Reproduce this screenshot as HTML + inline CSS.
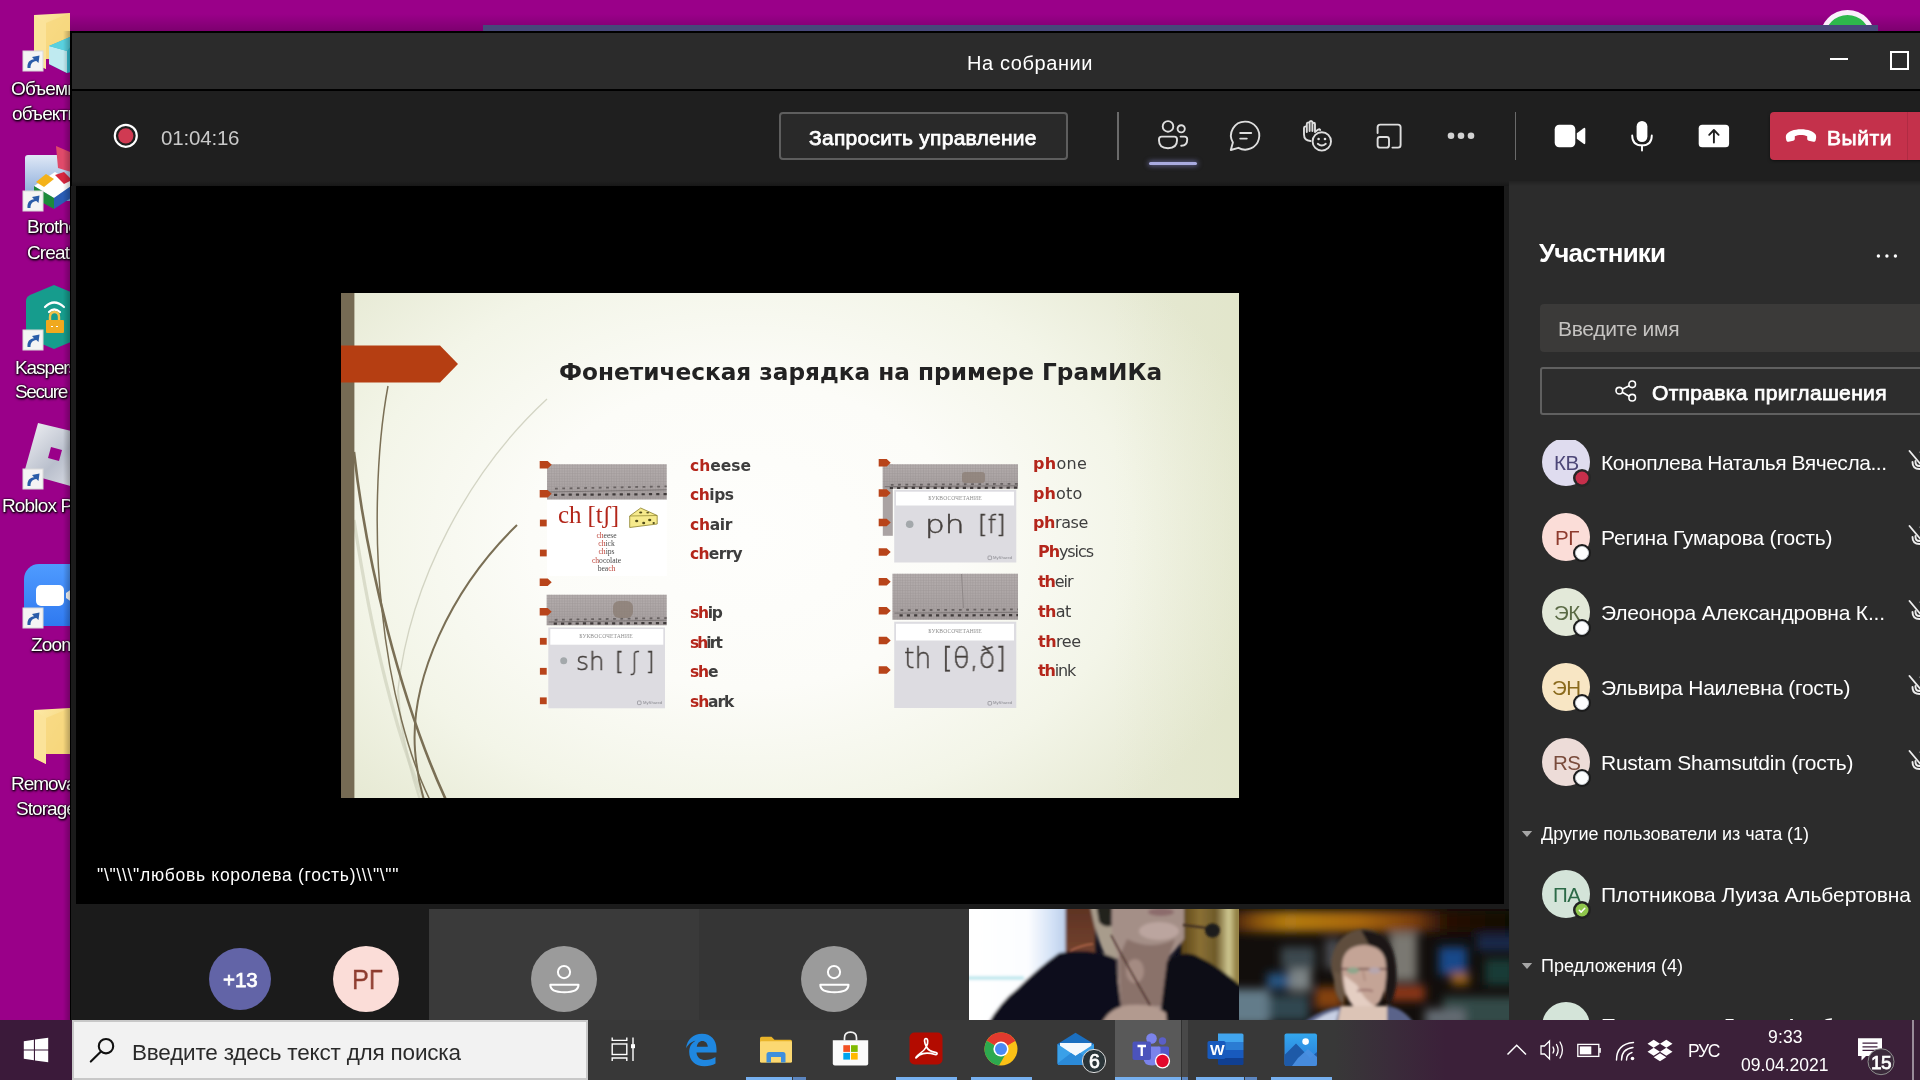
<!DOCTYPE html>
<html lang="ru"><head><meta charset="utf-8"><title>Собрание</title>
<style>

*{box-sizing:border-box;margin:0;padding:0}
html,body{width:1920px;height:1080px;overflow:hidden;background:#9a0089}
body{font-family:"Liberation Sans",sans-serif}
#root{position:absolute;left:0;top:0;width:1920px;height:1080px;overflow:hidden;background:#9a0089}
.t{position:absolute;white-space:nowrap;line-height:1;will-change:transform}
.a{position:absolute}
svg{position:absolute;overflow:visible}
.dl{text-shadow:0 0 2px #000,1px 1px 2px #000,0 1px 3px rgba(0,0,0,.9)}
.av{position:absolute;border-radius:50%;text-align:center}

</style></head>
<body>
<div id="root">
<!-- desktop -->
<div class="a" style="left:58px;top:14px;width:1862px;height:18px;background:linear-gradient(to bottom,rgba(0,0,0,0),rgba(0,0,0,.2))"></div>
<svg style="left:34px;top:13px" width="40" height="58" viewBox="0 0 40 58"><defs><linearGradient id="fg1" x1="0" y1="0" x2="1" y2="1"><stop offset="0" stop-color="#fde9a8"/><stop offset="1" stop-color="#f3cf6a"/></linearGradient></defs><path d="M0 2 L36 0 L36 46 L12 46 L12 56 L0 50Z" fill="url(#fg1)"/><path d="M0 2 L12 10 L12 56 L0 50Z" fill="#fbe39a"/><path d="M12 10 L36 0 L36 46 L12 46Z" fill="#f7d77e" opacity=".75"/></svg>
<svg style="left:49px;top:37px" width="26" height="36" viewBox="0 0 26 36"><path d="M0 9 L21 0 L26 2 L26 34 L18 36 L0 27Z" fill="#35bdd0"/><path d="M0 9 L18 14 L18 36 L0 27Z" fill="#bfeaf0"/><path d="M0 9 L21 0 L26 4 L18 14Z" fill="#59d0de"/></svg>
<svg style="left:23px;top:51px" width="20" height="20" viewBox="0 0 20 20"><rect x="0" y="0" width="20" height="20" fill="#f4f4f4" stroke="#d9d9d9" stroke-width="1"/><path d="M4.500 17 C4 11.500 7 8.500 11 8.300 L9 6 L16.500 4.500 L15.500 12 L13.300 10 C9.500 10.500 7.500 12.500 7.500 17Z" fill="#2a5ca8"/></svg>
<div class="t dl" style="left:11.20px;top:79px;font-size:19px;color:#fff;letter-spacing:-.85px">Объемные</div>
<div class="t dl" style="left:12.00px;top:104px;font-size:19px;color:#fff;letter-spacing:-.85px">объекты</div>
<svg style="left:24px;top:146px" width="60" height="64" viewBox="0 0 60 64"><defs><linearGradient id="bg2" x1="0" y1="0" x2="0" y2="1"><stop offset="0" stop-color="#dfe8f6"/><stop offset="1" stop-color="#7da3d6"/></linearGradient></defs><rect x="1" y="9" width="58" height="46" rx="3" fill="url(#bg2)"/><path d="M32 0 L60 12 L60 30 L34 22Z" fill="#e04a6a"/><path d="M10 40 L31 26 L50 38 L30 52Z" fill="#fff"/><path d="M12 36 L22 28 L30 33 L20 41Z" fill="#f4b21a"/><path d="M31 29 L40 26 L48 34 L40 38Z" fill="#d8263f"/><path d="M10 40 L30 52 L30 63 L10 52Z" fill="#1c8a3a"/><path d="M30 52 L50 38 L50 50 L30 63Z" fill="#2a5db5"/></svg>
<svg style="left:23px;top:191px" width="20" height="20" viewBox="0 0 20 20"><rect x="0" y="0" width="20" height="20" fill="#f4f4f4" stroke="#d9d9d9" stroke-width="1"/><path d="M4.500 17 C4 11.500 7 8.500 11 8.300 L9 6 L16.500 4.500 L15.500 12 L13.300 10 C9.500 10.500 7.500 12.500 7.500 17Z" fill="#2a5ca8"/></svg>
<div class="t dl" style="left:26.60px;top:217px;font-size:19px;color:#fff;letter-spacing:-.85px">Brother</div>
<div class="t dl" style="left:26.80px;top:243px;font-size:19px;color:#fff;letter-spacing:-.85px">Creative...</div>
<svg style="left:26px;top:285px" width="56" height="64" viewBox="0 0 56 64"><path d="M28 0 L52 10 Q56 12 56 16 L56 48 Q56 52 52 54 L28 64 L4 54 Q0 52 0 48 L0 16 Q0 12 4 10Z" fill="#169c8d"/><path d="M19 22 Q28 13 38 22" fill="none" stroke="#fff" stroke-width="2.2" stroke-linecap="round"/><path d="M23 27 Q28 22 34 27" fill="none" stroke="#fff" stroke-width="2.2" stroke-linecap="round"/><path d="M24 36 L24 32 Q24 27 28.5 27 Q33 27 33 32 L33 36" fill="none" stroke="#f2c14a" stroke-width="2.4"/><rect x="20" y="35" width="18" height="13" rx="1" fill="#f0a91e"/><path d="M25 41.5h2m3 0h2" stroke="#fff" stroke-width="1.2"/></svg>
<svg style="left:23px;top:330px" width="20" height="20" viewBox="0 0 20 20"><rect x="0" y="0" width="20" height="20" fill="#f4f4f4" stroke="#d9d9d9" stroke-width="1"/><path d="M4.500 17 C4 11.500 7 8.500 11 8.300 L9 6 L16.500 4.500 L15.500 12 L13.300 10 C9.500 10.500 7.500 12.500 7.500 17Z" fill="#2a5ca8"/></svg>
<div class="t dl" style="left:15.00px;top:358px;font-size:19px;color:#fff;letter-spacing:-1.1px">Kaspersky</div>
<div class="t dl" style="left:15.00px;top:382px;font-size:19px;color:#fff;letter-spacing:-1.4px">Secure Co...</div>
<svg style="left:24px;top:423px" width="64" height="66" viewBox="0 0 64 66"><defs><linearGradient id="rg4" x1="0" y1="0" x2="1" y2="1"><stop offset="0" stop-color="#f2f3f6"/><stop offset=".55" stop-color="#b9bfcc"/><stop offset="1" stop-color="#e4e6ec"/></linearGradient></defs><path d="M14 0 L64 12 L50 64 L0 50Z" fill="url(#rg4)"/><path d="M27 24 L38 27 L35 38 L24 35Z" fill="#9a0089"/></svg>
<svg style="left:23px;top:469px" width="20" height="20" viewBox="0 0 20 20"><rect x="0" y="0" width="20" height="20" fill="#f4f4f4" stroke="#d9d9d9" stroke-width="1"/><path d="M4.500 17 C4 11.500 7 8.500 11 8.300 L9 6 L16.500 4.500 L15.500 12 L13.300 10 C9.500 10.500 7.500 12.500 7.500 17Z" fill="#2a5ca8"/></svg>
<div class="t dl" style="left:2.20px;top:496px;font-size:19px;color:#fff;letter-spacing:-.85px">Roblox Player</div>
<svg style="left:24px;top:564px" width="62" height="62" viewBox="0 0 62 62"><defs><linearGradient id="zg5" x1="0" y1="0" x2="0" y2="1"><stop offset="0" stop-color="#4f9bff"/><stop offset="1" stop-color="#2f79f0"/></linearGradient></defs><rect width="62" height="62" rx="15" fill="url(#zg5)"/><rect x="12" y="21" width="28" height="21" rx="5" fill="#fff"/><path d="M42 29 L52 22 L52 41 L42 34Z" fill="#fff"/></svg>
<svg style="left:23px;top:608px" width="20" height="20" viewBox="0 0 20 20"><rect x="0" y="0" width="20" height="20" fill="#f4f4f4" stroke="#d9d9d9" stroke-width="1"/><path d="M4.500 17 C4 11.500 7 8.500 11 8.300 L9 6 L16.500 4.500 L15.500 12 L13.300 10 C9.500 10.500 7.500 12.500 7.500 17Z" fill="#2a5ca8"/></svg>
<div class="t dl" style="left:30.50px;top:635px;font-size:19px;color:#fff;letter-spacing:-.8px">Zoom</div>
<svg style="left:34px;top:708px" width="40" height="58" viewBox="0 0 40 58"><defs><linearGradient id="fg6" x1="0" y1="0" x2="1" y2="1"><stop offset="0" stop-color="#fde9a8"/><stop offset="1" stop-color="#f3cf6a"/></linearGradient></defs><path d="M0 2 L36 0 L36 46 L12 46 L12 56 L0 50Z" fill="url(#fg6)"/><path d="M0 2 L12 10 L12 56 L0 50Z" fill="#fbe39a"/><path d="M12 10 L36 0 L36 46 L12 46Z" fill="#f7d77e" opacity=".75"/></svg>
<div class="t dl" style="left:11.20px;top:774px;font-size:19px;color:#fff;letter-spacing:-1.05px">Removable</div>
<div class="t dl" style="left:15.60px;top:799px;font-size:19px;color:#fff;letter-spacing:-.95px">Storage ...</div>
<div class="a" style="left:63px;top:31px;width:8px;height:989px;background:linear-gradient(to right,rgba(0,0,0,0),rgba(0,0,0,.28))"></div>
<div class="a" style="left:1820px;top:9.5px;width:55px;height:55px;border-radius:50%;background:#2eb84c;border:5px solid #fbeefb"></div>
<div class="a" style="left:483px;top:25px;width:1395px;height:7px;background:#47487a"></div>
<!-- meeting window -->
<div class="a" style="left:70px;top:31px;width:1850px;height:989px;background:#000"></div>
<div class="a" style="left:72px;top:33px;width:1848px;height:56px;background:#2b2b2b"></div>
<div class="a" style="left:72px;top:91px;width:1848px;height:95px;background:linear-gradient(to bottom,#1f1f1f 0,#1f1f1f 90px,#181818 95px)"></div>
<div class="a" style="left:71px;top:186px;width:1849px;height:834px;background:#1b1b1b"></div>
<div class="a" style="left:76px;top:186px;width:1428px;height:718px;background:#000"></div>
<div class="t" style="left:967.30px;top:53px;font-size:20px;color:#fff;letter-spacing:0.594px;">На собрании</div>
<div class="a" style="left:1830px;top:58.4px;width:18px;height:1.6px;background:#fff"></div>
<div class="a" style="left:1890px;top:51px;width:18.5px;height:18.5px;border:2px solid #fff"></div>
<svg style="left:112px;top:122px" width="28" height="28" viewBox="0 0 28 28"><circle cx="13.8" cy="13.8" r="11" fill="none" stroke="#fff" stroke-width="2.2"/><circle cx="13.8" cy="13.8" r="7.6" fill="#d03a52"/></svg>
<div class="t" style="left:160.60px;top:128px;font-size:20.5px;color:#c9c9c9;letter-spacing:-0.185px;">01:04:16</div>
<div class="a" style="left:779px;top:112px;width:289px;height:48px;border:2px solid #5e5e5e;border-radius:4px;background:#292929"></div>
<div class="t" style="left:809.30px;top:127px;font-size:21px;color:#fff;letter-spacing:0.260px;-webkit-text-stroke:.75px #fff;">Запросить управление</div>
<div class="a" style="left:1117px;top:112px;width:2px;height:48px;background:#6a6a6a"></div>
<div class="a" style="left:1515px;top:112px;width:1.4px;height:48px;background:#6a6a6a"></div>
<svg style="left:1156px;top:119px" width="34" height="32" viewBox="0 0 34 32"><g fill="none" stroke="#dedede" stroke-width="1.9" stroke-linecap="round" stroke-linejoin="round"><circle cx="12" cy="7.4" r="5.3"/><circle cx="25.2" cy="9.8" r="3.6"/><path d="M5.6 17.6 H18.4 Q21 17.6 21 20.2 V21.6 Q21 29.2 12 29.2 Q3 29.2 3 21.6 V20.2 Q3 17.6 5.6 17.6Z"/><path d="M24.6 17.6 H28.6 Q31.2 17.6 31.2 20.2 V20.8 Q31.2 26.6 25.2 26.8"/></g></svg>
<div class="a" style="left:1149px;top:161.6px;width:48px;height:3.6px;border-radius:2px;background:#a9abe0;box-shadow:0 0 5px 1px rgba(150,152,230,.55)"></div>
<svg style="left:1228px;top:119px" width="34" height="34" viewBox="0 0 34 34"><g fill="none" stroke="#dedede" stroke-width="1.9" stroke-linecap="round" stroke-linejoin="round"><path d="M17.2 2.6 A14 14 0 1 1 10.4 28.8 L2.8 31 L4.9 23.6 A14 14 0 0 1 17.2 2.6Z"/><path d="M12.2 14h11M12.2 19.6h6.6"/></g></svg>
<svg style="left:1301px;top:119px" width="34" height="34" viewBox="0 0 34 34"><g fill="none" stroke="#dedede" stroke-width="1.9" stroke-linecap="round" stroke-linejoin="round"><path d="M3 9 V15.5 Q3 21.5 9.5 22 M3 9 Q3 7.4 4.4 7.4 Q5.8 7.400 5.8 9 V13 M5.800 13 V5 Q5.800 3.400 7.200 3.400 Q8.600 3.400 8.600 5 V12 M8.600 12 V3.600 Q8.600 2 10 2 Q11.400 2 11.400 3.600 V12 M11.400 12 V5.200 Q11.400 3.800 12.700 3.800 Q14 3.800 14 5.200 V13 L17.200 10.600 Q18.600 9.800 19.200 11"/><circle cx="20.8" cy="22.400" r="9.200"/><path d="M16.800 24.800 Q20.800 28.400 24.800 24.800"/></g><circle cx="17.600" cy="20" r="1.300" fill="#dedede"/><circle cx="24" cy="20" r="1.300" fill="#dedede"/></svg>
<svg style="left:1375px;top:122px" width="28" height="28" viewBox="0 0 28 28"><g fill="none" stroke="#dedede" stroke-width="1.9" stroke-linecap="round" stroke-linejoin="round"><path d="M2.600 11 V5.200 Q2.600 2.600 5.200 2.600 H23 Q25.600 2.600 25.600 5.200 V23 Q25.600 25.600 23 25.600 H17.400"/><rect x="2.600" y="15" width="11.400" height="10.600" rx="2.400"/></g></svg>
<svg style="left:1446px;top:130px" width="30" height="12" viewBox="0 0 30 12"><circle cx="5" cy="5.800" r="3.300" fill="#d2d2d2"/><circle cx="15" cy="5.800" r="3.300" fill="#d2d2d2"/><circle cx="25" cy="5.800" r="3.300" fill="#d2d2d2"/></svg>
<svg style="left:1554px;top:124px" width="33" height="24" viewBox="0 0 33 24"><rect x=".7" y=".7" width="20.600" height="22.600" rx="4.500" fill="#fff"/><path d="M22.800 9.200 L29.600 4.200 Q31.300 3.200 31.300 5.200 V18.800 Q31.300 20.800 29.600 19.800 L22.800 14.800Z" fill="#fff"/></svg>
<svg style="left:1630px;top:120px" width="24" height="32" viewBox="0 0 24 32"><rect x="6.600" y="1" width="10.800" height="21" rx="5.400" fill="#fff"/><path d="M2.200 15.500 Q2.200 25.400 12 25.400 Q21.800 25.400 21.800 15.500" fill="none" stroke="#fff" stroke-width="1.900" stroke-linecap="round"/><path d="M12 25.400V30.600" stroke="#fff" stroke-width="1.900" stroke-linecap="round"/></svg>
<svg style="left:1698px;top:124px" width="32" height="24" viewBox="0 0 32 24"><rect x=".7" y=".7" width="30.400" height="22.600" rx="3.600" fill="#fff"/><path d="M15.900 18.600 V6.400 M11.200 10.800 L15.900 6 L20.600 10.800" fill="none" stroke="#1f1f1f" stroke-width="1.900" stroke-linecap="round" stroke-linejoin="round"/></svg>
<div class="a" style="left:1770px;top:112px;width:160px;height:48px;border-radius:4px;background:#c4314b;box-shadow:0 1px 3px rgba(0,0,0,.5)"></div>
<div class="a" style="left:1906.500px;top:112px;width:1.500px;height:48px;background:#b02b43"></div>
<svg style="left:1785px;top:128px" width="32" height="16" viewBox="0 0 32 16"><path d="M16 1.200 C9 1.200 3.200 3.400 1.400 6.600 C.5 8.200 .8 10.600 1.400 12.400 C1.700 13.400 2.600 13.900 3.600 13.700 L8.200 12.700 C9.200 12.500 9.800 11.700 9.800 10.700 L9.800 8.200 C11.600 7.400 13.800 7 16 7 C18.200 7 20.400 7.400 22.200 8.200 L22.200 10.700 C22.200 11.700 22.800 12.500 23.800 12.700 L28.400 13.700 C29.400 13.900 30.300 13.400 30.600 12.400 C31.200 10.600 31.500 8.200 30.600 6.600 C28.800 3.400 23 1.200 16 1.200Z" fill="#fff"/></svg>
<div class="t" style="left:1827.30px;top:127px;font-size:21px;color:#fff;letter-spacing:0.580px;-webkit-text-stroke:.75px #fff;">Выйти</div>
<!-- shared slide -->
<div class="a" style="left:0;top:0;width:1920px;height:1080px;filter:blur(.45px)">
<div class="a" style="left:341px;top:293px;width:898px;height:505px;background:radial-gradient(ellipse 60% 76% at 45% 48%,#fefefc 0,#fcfcf8 40%,#f3f5e8 72%,#e6e9d3 100%)"></div>
<div class="a" style="left:341px;top:293px;width:898px;height:505px;background:linear-gradient(to right,rgba(215,220,180,0) 86%,rgba(212,218,176,.22) 100%)"></div>
<svg style="left:0;top:0" width="1920" height="1080" viewBox="0 0 1920 1080"><defs><pattern id="nb" width="2.600" height="2.600" patternUnits="userSpaceOnUse"><path d="M0 .4H2.600M.4 0V2.600" stroke="#8f8888" stroke-width=".5"/></pattern><linearGradient id="nbg" x1="0" y1="0" x2="0" y2="1"><stop offset="0" stop-color="#b4adad"/><stop offset="1" stop-color="#a59e9e"/></linearGradient><clipPath id="sc"><rect x="341" y="293" width="898" height="505"/></clipPath><filter id="b1" x="-10%" y="-10%" width="120%" height="120%"><feGaussianBlur stdDeviation=".6"/></filter></defs><g clip-path="url(#sc)"><path d="M547 399 C470 470 410 580 398 690" fill="none" stroke="#c9cbb8" stroke-width="1.300" opacity=".8"/><path d="M354 520 C372 640 398 740 424 800" fill="none" stroke="#d3d6c2" stroke-width="3.200" opacity=".8"/><path d="M398 690 C400 730 410 770 420 800" fill="none" stroke="#cfd2bd" stroke-width="2.200" opacity=".7"/><path d="M388 386 C376 450 374 540 382 610 C390 690 410 760 430 800" fill="none" stroke="#7a6f55" stroke-width="1.500"/><path d="M354 452 C366 560 400 700 446 800" fill="none" stroke="#7a6f55" stroke-width="2.600"/><path d="M517 525 C450 590 410 680 415 750 C417 775 421 790 424 800" fill="none" stroke="#7a6f55" stroke-width="2"/></g><rect x="341" y="293" width="13.400" height="505" fill="#766b54"/><path d="M341 345.500 H440 L458 364 L440 382.500 H341Z" fill="#b53e12"/><rect x="547.0" y="464.2" width="119.7" height="35.5" fill="url(#nbg)"/><rect x="547.0" y="464.2" width="119.7" height="35.5" fill="url(#nb)" opacity=".55"/><path d="M549.0 492.0 L666.7 489.8" stroke="#5a5454" stroke-width=".7" opacity=".8"/><path d="M555.0 488.6 L666.7 486.4" stroke="#5e5858" stroke-width="1.800" stroke-dasharray="2.800 4.500" opacity=".85"/><path d="M554.0 494.8 L666.7 494.1" stroke="#403b3b" stroke-width="2.200" stroke-dasharray="3.200 4.100"/><rect x="547" y="499.700" width="119.700" height="76.300" fill="#fff"/><g transform="translate(628.700,507)"><path d="M1 9 L12 1 L28.500 8.500 L28.500 17 L1 20.500Z" fill="#f6ea8c" stroke="#8a7f2a" stroke-width=".8"/><path d="M1 9 L28.500 8.500" stroke="#8a7f2a" stroke-width=".7" fill="none"/><ellipse cx="8" cy="14" rx="1.600" ry="1.200" fill="#4f4a1a"/><ellipse cx="15" cy="16" rx="1.500" ry="1.200" fill="#4f4a1a"/><ellipse cx="21" cy="13" rx="1.600" ry="1.200" fill="#4f4a1a"/><ellipse cx="12" cy="5.500" rx="1.600" ry=".9" fill="#4f4a1a"/><ellipse cx="19" cy="5.800" rx="1.500" ry=".8" fill="#4f4a1a"/><ellipse cx="25" cy="16" rx="1.200" ry="1" fill="#4f4a1a"/></g><rect x="546.7" y="594.7" width="120.0" height="30.6" fill="url(#nbg)"/><rect x="546.7" y="594.7" width="120.0" height="30.6" fill="url(#nb)" opacity=".55"/><path d="M548.7 622.0 L666.7 620.2" stroke="#5a5454" stroke-width=".7" opacity=".8"/><path d="M554.7 619.8 L666.7 618.0" stroke="#5e5858" stroke-width="1.800" stroke-dasharray="2.800 4.500" opacity=".85"/><path d="M553.7 623.6 L666.7 623.1" stroke="#403b3b" stroke-width="2.200" stroke-dasharray="3.200 4.100"/><rect x="613" y="601" width="20" height="17" rx="6" fill="#8a7c72" opacity=".75" filter="url(#b1)"/><rect x="548.300" y="627.500" width="116.700" height="80.800" fill="#dddce1"/><rect x="550.300" y="629" width="113" height="15.700" fill="#fff"/><circle cx="563.700" cy="660.800" r="3.500" fill="#a3a8ab"/><rect x="882.800" y="464.200" width="10" height="71.600" fill="#aaa3a3"/><rect x="882.8" y="464.2" width="135.2" height="24.5" fill="url(#nbg)"/><rect x="882.8" y="464.2" width="135.2" height="24.5" fill="url(#nb)" opacity=".55"/><path d="M884.8 486.7 L1018.0 485.7" stroke="#5a5454" stroke-width=".7" opacity=".8"/><path d="M890.8 484.8 L1018.0 483.8" stroke="#5e5858" stroke-width="1.800" stroke-dasharray="2.800 4.500" opacity=".85"/><path d="M889.8 488.0 L1018.0 487.7" stroke="#403b3b" stroke-width="2.200" stroke-dasharray="3.200 4.100"/><rect x="962" y="472" width="23" height="11" rx="3" fill="#8a7c72" opacity=".7" filter="url(#b1)"/><rect x="894.200" y="489.700" width="122.100" height="72.800" fill="#dddce1"/><rect x="896" y="491.700" width="118" height="13.800" fill="#fff"/><circle cx="909.700" cy="524.200" r="3.800" fill="#a3a8ab"/><rect x="892.5" y="573.7" width="125.5" height="46.0" fill="url(#nbg)"/><rect x="892.5" y="573.7" width="125.5" height="46.0" fill="url(#nb)" opacity=".55"/><path d="M894.5 613.1 L1018.0 612.3" stroke="#5a5454" stroke-width=".7" opacity=".8"/><path d="M900.5 610.2 L1018.0 609.4" stroke="#5e5858" stroke-width="1.800" stroke-dasharray="2.800 4.500" opacity=".85"/><path d="M899.5 615.4 L1018.0 615.2" stroke="#403b3b" stroke-width="2.200" stroke-dasharray="3.200 4.100"/><path d="M961.500 574 L963.500 608" stroke="#8f8888" stroke-width="1"/><rect x="894.200" y="621.700" width="122.100" height="86.300" fill="#dddce1"/><rect x="896" y="623.800" width="118" height="16.700" fill="#fff"/><path d="M539.7 461.0 h8 l4 3.700 l-4 3.700 h-8Z" fill="#b8441a"/><path d="M539.7 490.0 h8 l4 3.700 l-4 3.700 h-8Z" fill="#b8441a"/><rect x="539.9" y="519.6" width="6.800" height="6.800" fill="#b8441a"/><rect x="539.9" y="549.6" width="6.800" height="6.800" fill="#b8441a"/><path d="M539.7 578.5 h8 l4 3.700 l-4 3.700 h-8Z" fill="#b8441a"/><path d="M539.7 608.0 h8 l4 3.700 l-4 3.700 h-8Z" fill="#b8441a"/><rect x="539.9" y="637.9" width="6.800" height="6.800" fill="#b8441a"/><rect x="539.9" y="667.9" width="6.800" height="6.800" fill="#b8441a"/><rect x="539.9" y="697.4" width="6.800" height="6.800" fill="#b8441a"/><path d="M878.7 459.1 h8 l4 3.700 l-4 3.700 h-8Z" fill="#b8441a"/><path d="M878.7 489.3 h8 l4 3.700 l-4 3.700 h-8Z" fill="#b8441a"/><path d="M878.7 518.8 h8 l4 3.700 l-4 3.700 h-8Z" fill="#b8441a"/><path d="M878.7 548.3 h8 l4 3.700 l-4 3.700 h-8Z" fill="#b8441a"/><path d="M878.7 578.0 h8 l4 3.700 l-4 3.700 h-8Z" fill="#b8441a"/><path d="M878.7 607.1 h8 l4 3.700 l-4 3.700 h-8Z" fill="#b8441a"/><path d="M878.7 636.8 h8 l4 3.700 l-4 3.700 h-8Z" fill="#b8441a"/><path d="M878.7 666.3 h8 l4 3.700 l-4 3.700 h-8Z" fill="#b8441a"/><rect x="637.5" y="701.0" width="3.600" height="3.600" rx=".8" fill="none" stroke="#8a8a90" stroke-width=".7"/><rect x="988.0" y="556.0" width="3.600" height="3.600" rx=".8" fill="none" stroke="#8a8a90" stroke-width=".7"/><rect x="988.0" y="701.5" width="3.600" height="3.600" rx=".8" fill="none" stroke="#8a8a90" stroke-width=".7"/></svg>
<div class="t" style="left:558.60px;top:361px;font-size:22.3px;color:#222;font-weight:700;font-family:'DejaVu Sans','Liberation Sans',sans-serif;transform:scaleX(1.041);transform-origin:0 0;">Фонетическая зарядка на примере ГрамИКа</div>
<div class="t" style="left:689.50px;top:459px;font-size:15.5px;font-weight:700;font-family:'DejaVu Sans',sans-serif;color:#b4261b;letter-spacing:0.003px">ch<span style="color:#3e3e3e">eese</span></div>
<div class="t" style="left:689.50px;top:488px;font-size:15.5px;font-weight:700;font-family:'DejaVu Sans',sans-serif;color:#b4261b;letter-spacing:-0.464px">ch<span style="color:#3e3e3e">ips</span></div>
<div class="t" style="left:689.50px;top:518px;font-size:15.5px;font-weight:700;font-family:'DejaVu Sans',sans-serif;color:#b4261b;letter-spacing:-0.285px">ch<span style="color:#3e3e3e">air</span></div>
<div class="t" style="left:689.50px;top:547px;font-size:15.5px;font-weight:700;font-family:'DejaVu Sans',sans-serif;color:#b4261b;letter-spacing:-0.685px">ch<span style="color:#3e3e3e">erry</span></div>
<div class="t" style="left:689.50px;top:606px;font-size:15.5px;font-weight:700;font-family:'DejaVu Sans',sans-serif;color:#b4261b;letter-spacing:-1.290px">sh<span style="color:#3e3e3e">ip</span></div>
<div class="t" style="left:689.50px;top:636px;font-size:15.5px;font-weight:700;font-family:'DejaVu Sans',sans-serif;color:#b4261b;letter-spacing:-1.957px">sh<span style="color:#3e3e3e">irt</span></div>
<div class="t" style="left:689.50px;top:665px;font-size:15.5px;font-weight:700;font-family:'DejaVu Sans',sans-serif;color:#b4261b;letter-spacing:-1.137px">sh<span style="color:#3e3e3e">e</span></div>
<div class="t" style="left:689.50px;top:695px;font-size:15.5px;font-weight:700;font-family:'DejaVu Sans',sans-serif;color:#b4261b;letter-spacing:-1.093px">sh<span style="color:#3e3e3e">ark</span></div>
<div class="t" style="left:1033.40px;top:456px;font-size:16px;font-weight:700;font-family:'DejaVu Sans',sans-serif;color:#b4261b;letter-spacing:0.296px">ph<span style="color:#3e3e3e;font-weight:400">one</span></div>
<div class="t" style="left:1033.40px;top:486px;font-size:16px;font-weight:700;font-family:'DejaVu Sans',sans-serif;color:#b4261b;letter-spacing:0.126px">ph<span style="color:#3e3e3e;font-weight:400">oto</span></div>
<div class="t" style="left:1033.40px;top:515px;font-size:16px;font-weight:700;font-family:'DejaVu Sans',sans-serif;color:#b4261b;letter-spacing:-0.421px">ph<span style="color:#3e3e3e;font-weight:400">rase</span></div>
<div class="t" style="left:1038.30px;top:544px;font-size:16px;font-weight:700;font-family:'DejaVu Sans',sans-serif;color:#b4261b;letter-spacing:-1.083px">Ph<span style="color:#3e3e3e;font-weight:400">ysics</span></div>
<div class="t" style="left:1037.60px;top:574px;font-size:16px;font-weight:700;font-family:'DejaVu Sans',sans-serif;color:#b4261b;letter-spacing:-1.102px">th<span style="color:#3e3e3e;font-weight:400">eir</span></div>
<div class="t" style="left:1037.60px;top:604px;font-size:16px;font-weight:700;font-family:'DejaVu Sans',sans-serif;color:#b4261b;letter-spacing:-0.606px">th<span style="color:#3e3e3e;font-weight:400">at</span></div>
<div class="t" style="left:1037.60px;top:634px;font-size:16px;font-weight:700;font-family:'DejaVu Sans',sans-serif;color:#b4261b;letter-spacing:-0.488px">th<span style="color:#3e3e3e;font-weight:400">ree</span></div>
<div class="t" style="left:1037.60px;top:663px;font-size:16px;font-weight:700;font-family:'DejaVu Sans',sans-serif;color:#b4261b;letter-spacing:-1.148px">th<span style="color:#3e3e3e;font-weight:400">ink</span></div>
<div class="t" style="left:557.50px;top:502px;font-size:25px;color:#b3261a;letter-spacing:-0.128px;font-family:'Liberation Serif',serif;">ch [tʃ]</div>
<div class="t" style="left:576px;top:532.2px;width:61px;text-align:center;font-family:Liberation Serif,serif;font-size:7.6px;color:#333;opacity:.9"><span style="color:#b3261a">ch</span>eese<span style="color:#b3261a"></span></div>
<div class="t" style="left:576px;top:540.3px;width:61px;text-align:center;font-family:Liberation Serif,serif;font-size:7.6px;color:#333;opacity:.9"><span style="color:#b3261a">ch</span>ick<span style="color:#b3261a"></span></div>
<div class="t" style="left:576px;top:548.4px;width:61px;text-align:center;font-family:Liberation Serif,serif;font-size:7.6px;color:#333;opacity:.9"><span style="color:#b3261a">ch</span>ips<span style="color:#b3261a"></span></div>
<div class="t" style="left:576px;top:556.5px;width:61px;text-align:center;font-family:Liberation Serif,serif;font-size:7.6px;color:#333;opacity:.9"><span style="color:#b3261a">ch</span>ocolate<span style="color:#b3261a"></span></div>
<div class="t" style="left:576px;top:564.6px;width:61px;text-align:center;font-family:Liberation Serif,serif;font-size:7.6px;color:#333;opacity:.9"><span style="color:#b3261a"></span>bea<span style="color:#b3261a">ch</span></div>
<div class="t" style="left:566.0px;top:634.2px;width:80px;text-align:center;font-family:Liberation Serif,serif;font-size:5.6px;color:#8d8d8d;letter-spacing:.1px">БУКВОСОЧЕТАНИЕ</div>
<div class="t" style="left:915.0px;top:495.8px;width:80px;text-align:center;font-family:Liberation Serif,serif;font-size:5.6px;color:#8d8d8d;letter-spacing:.1px">БУКВОСОЧЕТАНИЕ</div>
<div class="t" style="left:915.0px;top:629.4px;width:80px;text-align:center;font-family:Liberation Serif,serif;font-size:5.6px;color:#8d8d8d;letter-spacing:.1px">БУКВОСОЧЕТАНИЕ</div>
<div class="t" style="left:575.80px;top:649px;font-size:25.5px;color:#443f3c;font-family:'DejaVu Sans Light','DejaVu Sans',sans-serif;font-weight:200;-webkit-text-stroke:.5px #443f3c;transform:scaleX(0.971);transform-origin:0 0;">sh</div>
<div class="t" style="left:615.30px;top:649px;font-size:25.5px;color:#443f3c;font-family:'DejaVu Sans Light','DejaVu Sans',sans-serif;font-weight:200;-webkit-text-stroke:.5px #443f3c;transform:scaleX(0.884);transform-origin:0 0;">[ ʃ ]</div>
<div class="t" style="left:925.00px;top:512px;font-size:25.5px;color:#443f3c;font-family:'DejaVu Sans Light','DejaVu Sans',sans-serif;font-weight:200;-webkit-text-stroke:.5px #443f3c;transform:scaleX(1.224);transform-origin:0 0;">ph</div>
<div class="t" style="left:978.00px;top:512px;font-size:25.5px;color:#443f3c;font-family:'DejaVu Sans Light','DejaVu Sans',sans-serif;font-weight:200;-webkit-text-stroke:.5px #443f3c;transform:scaleX(0.952);transform-origin:0 0;">[f]</div>
<div class="t" style="left:904.00px;top:645px;font-size:28px;color:#443f3c;font-family:'DejaVu Sans Light','DejaVu Sans',sans-serif;font-weight:200;-webkit-text-stroke:.5px #443f3c;transform:scaleX(0.950);transform-origin:0 0;">th</div>
<div class="t" style="left:942.00px;top:645px;font-size:28px;color:#443f3c;font-family:'DejaVu Sans Light','DejaVu Sans',sans-serif;font-weight:200;-webkit-text-stroke:.5px #443f3c;transform:scaleX(0.989);transform-origin:0 0;">[θ,ð]</div>
<div class="t" style="left:642.5px;top:700.8px;font-size:4.2px;color:#8a8a90">MyShared</div>
<div class="t" style="left:993.0px;top:555.8px;font-size:4.2px;color:#8a8a90">MyShared</div>
<div class="t" style="left:993.0px;top:701.3px;font-size:4.2px;color:#8a8a90">MyShared</div>
</div>
<div class="t" style="left:97.00px;top:867px;font-size:17.5px;color:#fff;letter-spacing:0.705px;">"\"\\\"любовь королева (гость)\\\"\""</div>
<!-- participants strip -->
<div class="av" style="left:208.500px;top:948px;width:62px;height:62px;background:#6264a7"></div>
<div class="t" style="left:222.80px;top:970px;font-size:20.5px;color:#fff;-webkit-text-stroke:.75px #fff;transform:scaleX(0.992);transform-origin:0 0;">+13</div>
<div class="av" style="left:333px;top:946px;width:66px;height:66px;background:#fbddd8"></div>
<div class="t" style="left:351.50px;top:967px;font-size:27px;color:#8d3b2e;-webkit-text-stroke:.35px #8d3b2e;transform:scaleX(0.935);transform-origin:0 0;">РГ</div>
<div class="a" style="left:429px;top:909px;width:270px;height:111px;background:#3a3a3a"></div>
<div class="a" style="left:699px;top:909px;width:270px;height:111px;background:#353535"></div>
<svg style="left:531px;top:946px" width="66" height="66" viewBox="0 0 66 66"><circle cx="33" cy="33" r="33" fill="#9b9b9b"/><circle cx="33" cy="26.100" r="6.100" fill="none" stroke="#fff" stroke-width="2"/><path d="M19.300 38.700 H47.500 Q47.500 46.200 33.400 46.200 Q19.300 46.200 19.300 38.700Z" fill="none" stroke="#fff" stroke-width="2" stroke-linejoin="round"/></svg>
<svg style="left:801px;top:946px" width="66" height="66" viewBox="0 0 66 66"><circle cx="33" cy="33" r="33" fill="#9b9b9b"/><circle cx="33" cy="26.100" r="6.100" fill="none" stroke="#fff" stroke-width="2"/><path d="M19.300 38.700 H47.500 Q47.500 46.200 33.400 46.200 Q19.300 46.200 19.300 38.700Z" fill="none" stroke="#fff" stroke-width="2" stroke-linejoin="round"/></svg>
<svg style="left:969px;top:909px;overflow:hidden" width="270" height="111" viewBox="0 0 270 111"><defs><filter id="vb1" x="-20%" y="-20%" width="140%" height="140%"><feGaussianBlur stdDeviation="1.800"/></filter><filter id="vb0" x="-20%" y="-20%" width="140%" height="140%"><feGaussianBlur stdDeviation=".9"/></filter><filter id="vb4" x="-40%" y="-40%" width="180%" height="180%"><feGaussianBlur stdDeviation="4"/></filter><linearGradient id="vw" x1="0" x2="1"><stop offset="0" stop-color="#fff"/><stop offset=".62" stop-color="#fcfdff"/><stop offset=".85" stop-color="#d4e2f6"/><stop offset="1" stop-color="#b9cdea"/></linearGradient><linearGradient id="vc" x1="0" x2="1"><stop offset="0" stop-color="#5a4216"/><stop offset=".3" stop-color="#8a7034"/><stop offset=".55" stop-color="#6e5a2a"/><stop offset=".76" stop-color="#cfc892"/><stop offset=".9" stop-color="#8a7638"/><stop offset="1" stop-color="#c8c08a"/></linearGradient><linearGradient id="vbr" x1="0" y1="0" x2="0" y2="1"><stop offset="0" stop-color="#5c3122"/><stop offset="1" stop-color="#74432f"/></linearGradient></defs><rect width="270" height="111" fill="#0f0f1d"/><g filter="url(#vb1)"><rect x="-5" y="-5" width="103" height="121" fill="url(#vw)"/><rect x="-5" y="67.500" width="60" height="3" fill="#aee2ea"/><rect x="96.500" y="-5" width="30" height="52" fill="url(#vbr)"/><rect x="212" y="-5" width="63" height="80" fill="url(#vc)"/><path d="M121 -5 H150 V50 L138 50 Q127 30 121 -5Z" fill="#a89c8c"/><path d="M127 -5 H146 V15 Q137 21 130 13Z" fill="#24211e"/><path d="M143 -5 H215 V30 Q206 42 198 50 L200 100 H150 L148 44 Q141 30 143 -5Z" fill="#a48f87"/><path d="M158 30 Q182 42 206 30 L199 52 L196 97 H152 L150 48Z" fill="#8a726b"/><ellipse cx="190" cy="22" rx="20" ry="9" fill="#bba59f"/><ellipse cx="192" cy="3" rx="13" ry="4" fill="#8c6c6c"/><ellipse cx="166" cy="62" rx="9" ry="12" fill="#a48b82"/><path d="M18 116 Q32 92 48 80 Q70 58 90 44 Q120 38 146 49 L152 98 L134 116Z" fill="#10101e"/><path d="M190 116 L198 52 Q212 41 226 46 Q252 58 275 80 V116Z" fill="#0d0d19"/><path d="M132 116 Q140 98 160 96 Q186 94 197 104 L198 116Z" fill="#b29a8f"/></g><g filter="url(#vb0)"><path d="M142 26 Q160 60 181 96" fill="none" stroke="#3a221c" stroke-width="1.200"/><path d="M214 16 L238 19" stroke="#3a2a20" stroke-width="2"/><ellipse cx="243.500" cy="21.500" rx="7.400" ry="7" fill="#1c1a1c"/><path d="M101 42 Q112 36 124 35" stroke="#b96a4e" stroke-width="1.400" fill="none"/></g></svg>
<svg style="left:1239px;top:909px;overflow:hidden" width="270" height="111" viewBox="0 0 270 111"><defs><filter id="vb2" x="-30%" y="-30%" width="160%" height="160%"><feGaussianBlur stdDeviation="5"/></filter><filter id="vb3" x="-20%" y="-20%" width="140%" height="140%"><feGaussianBlur stdDeviation="1.700"/></filter><linearGradient id="vo" x1="0" x2="1"><stop offset="0" stop-color="#3a1804"/><stop offset=".1" stop-color="#8a540c"/><stop offset=".2" stop-color="#b47c12"/><stop offset=".45" stop-color="#a8660e"/><stop offset=".64" stop-color="#7a3e0a"/><stop offset=".74" stop-color="#2a1206"/><stop offset="1" stop-color="#0c0604"/></linearGradient></defs><rect width="270" height="111" fill="#120e0c"/><g filter="url(#vb2)"><rect x="-10" y="2" width="290" height="21" fill="url(#vo)"/><g opacity=".78"><rect x="42" y="38" width="34" height="22" fill="#4a5a62"/><rect x="86" y="30" width="16" height="30" fill="#5a5e66"/><rect x="-10" y="80" width="40" height="36" fill="#7a9cae"/><rect x="28" y="64" width="26" height="16" fill="#2c6aa4"/><rect x="50" y="60" width="22" height="22" fill="#9aa6a8"/><rect x="30" y="86" width="40" height="26" fill="#3a5864"/><rect x="76" y="78" width="28" height="22" fill="#a4500e"/><rect x="150" y="24" width="28" height="48" fill="#98968f"/><rect x="150" y="76" width="36" height="16" fill="#ae441a"/><rect x="200" y="38" width="28" height="28" fill="#1b5aae"/><rect x="212" y="64" width="18" height="12" fill="#c27c12"/><rect x="238" y="26" width="40" height="16" fill="#16305e"/><rect x="204" y="88" width="76" height="30" fill="#3c5c5a"/><rect x="186" y="100" width="40" height="18" fill="#7c8690"/><rect x="246" y="50" width="30" height="26" fill="#1d4a44"/></g></g><g filter="url(#vb3)"><path d="M62 116 Q80 100 104 97 H150 Q166 100 176 116Z" fill="#5a648a"/><path d="M70 116 Q84 104 100 101 L96 116Z" fill="#c8d0e4"/><ellipse cx="124" cy="56" rx="32" ry="36" fill="#5e4e3e"/><path d="M122 21 Q154 22 157 56 Q160 80 149 99 L143 60Z" fill="#1c1816"/><path d="M96 62 Q92 82 104 96 L108 70Z" fill="#6a5644"/><path d="M103 58 Q103 37 125 36 Q147 37 147 58 Q148 82 140 94 Q128 104 114 97 Q103 85 103 58Z" fill="#c4a496"/><path d="M105 66 Q105 92 118 99 L138 99 Q124 90 118 76Z" fill="#e4cec2"/><path d="M102 97 H148 V116 H98Z" fill="#dcc4b6"/><path d="M101 60 H148" stroke="#5a3a3a" stroke-width="1.500"/><ellipse cx="114" cy="61.500" rx="6" ry="3.200" fill="#8ea68c"/><ellipse cx="135.500" cy="61.500" rx="6" ry="3.200" fill="#b6a6ae"/><path d="M124 62 L126 72" stroke="#a88476" stroke-width="1.400" fill="none"/><path d="M118 82 Q126 80 134 82" stroke="#8a5c5c" stroke-width="1.400" fill="none"/></g></svg>
<!-- participants panel -->
<div class="a" style="left:1509px;top:181px;width:411px;height:839px;background:#2c2c2c"></div>
<div class="a" style="left:1509px;top:181px;width:411px;height:5px;background:linear-gradient(to bottom,#222,#2c2c2c)"></div>
<div class="t" style="left:1539.30px;top:240px;font-size:26px;color:#fff;letter-spacing:-0.826px;font-weight:700;">Участники</div>
<svg style="left:1875px;top:252px" width="24" height="8" viewBox="0 0 24 8"><circle cx="3.400" cy="4" r="1.700" fill="#fff"/><circle cx="11.900" cy="4" r="1.700" fill="#fff"/><circle cx="20.400" cy="4" r="1.700" fill="#fff"/></svg>
<div class="a" style="left:1540px;top:304px;width:390px;height:48px;border-radius:4px;background:#3b3a39"></div>
<div class="t" style="left:1557.60px;top:318px;font-size:21px;color:#c5c3c1;letter-spacing:-0.306px;">Введите имя</div>
<div class="a" style="left:1540px;top:367px;width:390px;height:48px;border:2px solid #606060;border-radius:3px;background:#2d2d2d"></div>
<svg style="left:1614px;top:379px" width="24" height="24" viewBox="0 0 24 24"><g fill="none" stroke="#fff" stroke-width="1.600"><circle cx="18.200" cy="5.300" r="3.300"/><circle cx="5.300" cy="11.700" r="3.300"/><circle cx="18.200" cy="18.700" r="3.300"/><path d="M8.200 10.300 L15.300 6.700 M8.200 13.200 L15.300 17.200"/></g></svg>
<div class="t" style="left:1652.30px;top:382px;font-size:21px;color:#fff;letter-spacing:0.335px;-webkit-text-stroke:.75px #fff;">Отправка приглашения</div>
<div class="av" style="left:1542px;top:438.3px;width:48px;height:48px;background:#dfdcef;clip-path:inset(1.600px 0 0 0)"></div>
<div class="t" style="left:1554.10px;top:453px;font-size:20.5px;color:#4d4778;letter-spacing:-.5px">КВ</div>
<svg style="left:1572.0px;top:467.6px" width="20" height="20" viewBox="0 0 20 20"><circle cx="10" cy="10" r="9" fill="#262626"/><circle cx="10" cy="10" r="6.500" fill="#c62f4b"/></svg>
<div class="t" style="left:1601.30px;top:452px;font-size:21px;color:#fff;letter-spacing:-0.462px;">Коноплева Наталья Вячесла...</div>
<svg style="left:1908px;top:450px" width="24" height="24" viewBox="0 0 24 24"><g fill="none" stroke="#ededed" stroke-width="1.900" stroke-linecap="round"><path d="M1.500 1 L17 19.500"/><path d="M7.500 11 V12 Q7.500 16 11.500 16 Q15.500 16 15.500 12 V5 Q15.500 2.500 12.500 2.200"/><path d="M4.500 12 Q4.500 19 11.500 19 Q18.500 19 18.500 12"/></g></svg>
<div class="av" style="left:1542px;top:513.3px;width:48px;height:48px;background:#fbddd8"></div>
<div class="t" style="left:1554.51px;top:528px;font-size:20.5px;color:#8e3b2e;letter-spacing:-.5px">РГ</div>
<svg style="left:1572.0px;top:542.6px" width="20" height="20" viewBox="0 0 20 20"><circle cx="10" cy="10" r="9" fill="#1c1c1c"/><circle cx="10" cy="10" r="6.400" fill="#fdfdfd"/><circle cx="10" cy="10" r="6.600" fill="none" stroke="#cfd6dc" stroke-width=".8"/></svg>
<div class="t" style="left:1601.30px;top:527px;font-size:21px;color:#fff;letter-spacing:-0.174px;">Регина Гумарова (гость)</div>
<svg style="left:1908px;top:525px" width="24" height="24" viewBox="0 0 24 24"><g fill="none" stroke="#ededed" stroke-width="1.900" stroke-linecap="round"><path d="M1.500 1 L17 19.500"/><path d="M7.500 11 V12 Q7.500 16 11.500 16 Q15.500 16 15.500 12 V5 Q15.500 2.500 12.500 2.200"/><path d="M4.500 12 Q4.500 19 11.500 19 Q18.500 19 18.500 12"/></g></svg>
<div class="av" style="left:1542px;top:588.3px;width:48px;height:48px;background:#e3e9d9"></div>
<div class="t" style="left:1553.59px;top:603px;font-size:20.5px;color:#5a6a45;letter-spacing:-.5px">ЭК</div>
<svg style="left:1572.0px;top:617.6px" width="20" height="20" viewBox="0 0 20 20"><circle cx="10" cy="10" r="9" fill="#1c1c1c"/><circle cx="10" cy="10" r="6.400" fill="#fdfdfd"/><circle cx="10" cy="10" r="6.600" fill="none" stroke="#cfd6dc" stroke-width=".8"/></svg>
<div class="t" style="left:1601.30px;top:602px;font-size:21px;color:#fff;letter-spacing:-0.201px;">Элеонора Александровна К...</div>
<svg style="left:1908px;top:600px" width="24" height="24" viewBox="0 0 24 24"><g fill="none" stroke="#ededed" stroke-width="1.900" stroke-linecap="round"><path d="M1.500 1 L17 19.500"/><path d="M7.500 11 V12 Q7.500 16 11.500 16 Q15.500 16 15.500 12 V5 Q15.500 2.500 12.500 2.200"/><path d="M4.500 12 Q4.500 19 11.500 19 Q18.500 19 18.500 12"/></g></svg>
<div class="av" style="left:1542px;top:663.3px;width:48px;height:48px;background:#f8e6c4"></div>
<div class="t" style="left:1552.19px;top:678px;font-size:20.5px;color:#8a6a1c;letter-spacing:-.5px">ЭН</div>
<svg style="left:1572.0px;top:692.6px" width="20" height="20" viewBox="0 0 20 20"><circle cx="10" cy="10" r="9" fill="#1c1c1c"/><circle cx="10" cy="10" r="6.400" fill="#fdfdfd"/><circle cx="10" cy="10" r="6.600" fill="none" stroke="#cfd6dc" stroke-width=".8"/></svg>
<div class="t" style="left:1601.30px;top:677px;font-size:21px;color:#fff;letter-spacing:-0.299px;">Эльвира Наилевна (гость)</div>
<svg style="left:1908px;top:675px" width="24" height="24" viewBox="0 0 24 24"><g fill="none" stroke="#ededed" stroke-width="1.900" stroke-linecap="round"><path d="M1.500 1 L17 19.500"/><path d="M7.500 11 V12 Q7.500 16 11.500 16 Q15.500 16 15.500 12 V5 Q15.500 2.500 12.500 2.200"/><path d="M4.500 12 Q4.500 19 11.500 19 Q18.500 19 18.500 12"/></g></svg>
<div class="av" style="left:1542px;top:738.3px;width:48px;height:48px;background:#eddcd8"></div>
<div class="t" style="left:1552.71px;top:753px;font-size:20.5px;color:#7a4c3c;letter-spacing:-.5px">RS</div>
<svg style="left:1572.0px;top:767.6px" width="20" height="20" viewBox="0 0 20 20"><circle cx="10" cy="10" r="9" fill="#1c1c1c"/><circle cx="10" cy="10" r="6.400" fill="#fdfdfd"/><circle cx="10" cy="10" r="6.600" fill="none" stroke="#cfd6dc" stroke-width=".8"/></svg>
<div class="t" style="left:1601.30px;top:752px;font-size:21px;color:#fff;letter-spacing:-0.264px;">Rustam Shamsutdin (гость)</div>
<svg style="left:1908px;top:750px" width="24" height="24" viewBox="0 0 24 24"><g fill="none" stroke="#ededed" stroke-width="1.900" stroke-linecap="round"><path d="M1.500 1 L17 19.500"/><path d="M7.500 11 V12 Q7.500 16 11.500 16 Q15.500 16 15.500 12 V5 Q15.500 2.500 12.500 2.200"/><path d="M4.500 12 Q4.500 19 11.500 19 Q18.500 19 18.500 12"/></g></svg>
<div class="av" style="left:1542px;top:870.3px;width:48px;height:48px;background:#d4e4d9"></div>
<div class="t" style="left:1552.74px;top:885px;font-size:20.5px;color:#2c6a47;letter-spacing:-.5px">ПА</div>
<svg style="left:1572.0px;top:899.6px" width="20" height="20" viewBox="0 0 20 20"><circle cx="10" cy="10" r="9" fill="#222"/><circle cx="10" cy="10" r="6.500" fill="#8fc64c"/><path d="M7.300 10.200 L9.200 12.100 L12.800 8.200" fill="none" stroke="#fff" stroke-width="1.500" stroke-linecap="round" stroke-linejoin="round"/></svg>
<div class="t" style="left:1601.30px;top:884px;font-size:21px;color:#fff;letter-spacing:-0.076px;">Плотникова Луиза Альбертовна</div>
<svg style="left:1521px;top:830px" width="12" height="8" viewBox="0 0 12 8"><path d="M.8 1 H11.200 L6 7Z" fill="#a6a6a6"/></svg>
<div class="t" style="left:1540.60px;top:825px;font-size:18px;color:#fff;letter-spacing:-0.043px;">Другие пользователи из чата (1)</div>
<svg style="left:1521px;top:962px" width="12" height="8" viewBox="0 0 12 8"><path d="M.8 1 H11.200 L6 7Z" fill="#a6a6a6"/></svg>
<div class="t" style="left:1540.60px;top:957px;font-size:18px;color:#fff;letter-spacing:-0.027px;">Предложения (4)</div>
<div class="av" style="left:1542px;top:1001.5px;width:48px;height:48px;background:#d4e4d9"></div>
<div class="t" style="left:1601.30px;top:1015px;font-size:21px;color:#fff;letter-spacing:-0.076px;">Плотникова Луиза Альбертовна</div>
<!-- taskbar -->
<div class="a" style="left:0;top:1020px;width:1920px;height:60px;background:linear-gradient(to right,#3b1a3a 0,#3b1a3a 72px,#383838 72px,#383838 1335px,#3a2c3a 1390px,#3b2039 1445px,#3b2039 100%)"></div>
<svg style="left:23px;top:1037px" width="26" height="26" viewBox="0 0 26 26"><path d="M.800 4.200 L10.900 2.800 V12.500 H.800Z M12 2.600 L25.200 .700 V12.500 H12Z M.800 13.500 H10.900 V23.200 L.800 21.800Z M12 13.500 H25.200 V25.300 L12 23.400Z" fill="#fff"/></svg>
<div class="a" style="left:72px;top:1020px;width:516px;height:60px;background:#f2f2f2;border:2px solid #c8c8c8"></div>
<svg style="left:89px;top:1037px" width="28" height="28" viewBox="0 0 28 28"><circle cx="17" cy="9.200" r="7.200" fill="none" stroke="#111" stroke-width="2.100"/><path d="M12 14.600 L1.800 24.600" stroke="#111" stroke-width="2.100" stroke-linecap="round"/></svg>
<div class="t" style="left:131.50px;top:1042px;font-size:22.5px;color:#2a2a2a;letter-spacing:-0.188px;">Введите здесь текст для поиска</div>
<svg style="left:610px;top:1036px" width="28" height="26" viewBox="0 0 28 26"><g fill="none" stroke="#fff" stroke-width="1.400"><rect x="2.200" y="8" width="14.600" height="10.500"/><path d="M2.200 1.500 V4.400 H16.800 V1.500 M2.200 25 V22 H16.800 V25 M23 1.500 V25"/></g><rect x="21" y="8.200" width="4" height="4" fill="#fff"/></svg>
<svg style="left:685px;top:1033px" width="33" height="34" viewBox="0 0 33 34"><path d="M1 15.500 C2 6.500 8.500 .800 17 .800 C26 .800 31.500 7 31.500 16 L31.500 19.500 L11.500 19.500 C11.800 24.500 15.500 27 20.500 27 C24 27 27.500 26 30.500 24 L30.500 30.500 C27.500 32.300 23.500 33.300 19.500 33.300 C10 33.300 4.200 27.500 4.200 19 C4.200 14 6.500 10 10.500 7.800 C6.500 8.500 3 11.500 1 15.500Z M11.800 13.800 L22.800 13.800 C22.600 10.300 20.500 8 17.300 8 C14.300 8 12.300 10.300 11.800 13.800Z" fill="#1f87e0" fill-rule="evenodd"/></svg>
<svg style="left:759px;top:1036px" width="34" height="28" viewBox="0 0 34 28"><path d="M1 2.500 Q1 .800 2.700 .800 H12.500 L15.500 3.800 H31.500 Q33 3.800 33 5.500 V25 Q33 26.500 31.500 26.500 H2.500 Q1 26.500 1 25Z" fill="#e9b42a"/><rect x="1" y="5.200" width="32" height="21.300" rx="1.200" fill="#fbd872"/><path d="M7.500 26.500 V18.500 Q7.500 16 10 16 H24 Q26.500 16 26.500 18.500 V26.500 H22 V21 H12 V26.500Z" fill="#3f8fdc"/></svg>
<svg style="left:832px;top:1031px" width="37" height="36" viewBox="0 0 37 36"><path d="M12.500 9.500 V7 Q12.500 1.200 18.500 1.200 Q24.500 1.200 24.500 7 V9.500" fill="none" stroke="#f2f2f2" stroke-width="1.700"/><path d="M.800 9.300 H36.200 V32.500 Q36.200 34.500 34.200 34.500 H2.800 Q.800 34.500 .800 32.500Z" fill="#fafafa"/><rect x="11.300" y="14.200" width="6.700" height="6.700" fill="#f25022"/><rect x="19" y="14.200" width="6.700" height="6.700" fill="#7fba00"/><rect x="11.300" y="21.900" width="6.700" height="6.700" fill="#00a4ef"/><rect x="19" y="21.900" width="6.700" height="6.700" fill="#ffb900"/></svg>
<svg style="left:909px;top:1032px" width="34" height="33" viewBox="0 0 34 33"><rect x=".500" y=".500" width="33" height="32" rx="5" fill="#b30b00"/><path d="M7 25.500 C9 21.500 14.500 20.800 17.500 14.500 C19.500 10 18.800 6.500 17 6.500 C15 6.500 15 10.500 17.500 15 C20 19.500 24.500 20 27 20.500 C29 21 28 23 26 22.500 C21 21 15 20.500 10.500 23 C8 24.500 6.500 27 7 25.500Z" fill="none" stroke="#fff" stroke-width="1.700" stroke-linejoin="round"/></svg>
<svg style="left:984px;top:1032px" width="34" height="34" viewBox="0 0 34 34"><circle cx="17" cy="17" r="16.500" fill="#fbc116"/><path d="M17 17 L2.700 8.700 A16.500 16.500 0 0 1 31.300 8.700 Z" fill="#e23a2e"/><path d="M17 17 L2.700 8.700 A16.500 16.500 0 0 0 15 33.400 L22.500 20.500 Z" fill="#2da94f"/><path d="M31.300 8.700 H17 V17Z" fill="#e23a2e"/><circle cx="17" cy="17" r="7.600" fill="#fff"/><circle cx="17" cy="17" r="6" fill="#4a8af4"/></svg>
<svg style="left:1057px;top:1032px" width="50" height="44" viewBox="0 0 50 44"><path d="M.500 12 L18.500 .800 L37 12 V31 Q37 33 35 33 H2.500 Q.500 33 .500 31Z" fill="#1b6fc0"/><path d="M3 11 H34.500 V24 H3Z" fill="#f4f8fc"/><path d="M.500 12 L18.500 24 L37 12 V31 Q37 33 35 33 H2.500 Q.500 33 .500 31Z" fill="#3aa0e8"/><path d="M.500 31.500 L14 21 L18.500 24 L23 21 L37 31.500 Q37 33 35 33 H2.500 Q.500 33 .500 31.500Z" fill="#2b8ad8"/><circle cx="37" cy="29" r="11.600" fill="#2a3438" stroke="#dcdcdc" stroke-width="1"/></svg>
<div class="t" style="left:1089.30px;top:1052px;font-size:19.5px;color:#fff;-webkit-text-stroke:.75px #fff;">6</div>
<div class="a" style="left:1115px;top:1020px;width:66px;height:60px;background:#595959"></div>
<div class="a" style="left:1181px;top:1020px;width:7px;height:60px;background:#484848;border-left:1px solid #303030"></div>
<svg style="left:1132px;top:1032px" width="40" height="38" viewBox="0 0 40 38"><circle cx="30.500" cy="9" r="3.700" fill="#5b5fc7"/><path d="M26 14.500 H35.500 Q37 14.500 37 16 V24 Q37 29 32 29 Q28 29 26 26Z" fill="#5059c9"/><circle cx="19.500" cy="6.500" r="5.300" fill="#7b83eb"/><path d="M11.500 14.500 H27 Q28.500 14.500 28.500 16 V26 Q28.500 33.500 20 33.500 Q11.500 33.500 11.500 26Z" fill="#7b83eb"/><rect x=".500" y="9.500" width="18.500" height="18.500" rx="2" fill="#4b53bc"/><path d="M5.500 14 H14 M9.750 14 V24" stroke="#fff" stroke-width="2.300" fill="none"/><circle cx="30.500" cy="29" r="7.600" fill="#fff"/><circle cx="30.500" cy="29" r="6.200" fill="#e3082c"/></svg>
<svg style="left:1207px;top:1033px" width="37" height="33" viewBox="0 0 37 33"><path d="M11 .500 H35 Q36.500 .500 36.500 2 V9 H11Z" fill="#41a5ee"/><rect x="11" y="9" width="25.500" height="8" fill="#2b7cd3"/><rect x="11" y="17" width="25.500" height="8" fill="#185abd"/><path d="M11 25 H36.500 V30.500 Q36.500 32 35 32 H12.500 Q11 32 11 30.500Z" fill="#103f91"/><rect x=".500" y="8" width="18" height="18" rx="1.800" fill="#185abd"/></svg>
<div class="t" style="left:1210.20px;top:1042px;font-size:15.5px;color:#fff;font-weight:700;">W</div>
<svg style="left:1284px;top:1033px" width="34" height="34" viewBox="0 0 34 34"><defs><linearGradient id="ph1" x1="0" y1="0" x2="0" y2="1"><stop offset="0" stop-color="#33a7ee"/><stop offset="1" stop-color="#2a78d8"/></linearGradient></defs><rect x=".500" y=".500" width="32.500" height="32.500" rx="2" fill="url(#ph1)"/><path d="M.500 22 L12 10.500 L26 25 L33 19 V31 Q33 33 31 33 H2.500 Q.500 33 .500 31Z" fill="#1e5aa8"/><path d="M14 25 L24 16 L33 24 V31 Q33 33 31 33 H8Z" fill="#4a90e2" opacity=".9"/><circle cx="21.600" cy="8.600" r="3.300" fill="#fff"/></svg>
<div class="a" style="left:746px;top:1077px;width:46px;height:3px;background:#76b0f0"></div>
<div class="a" style="left:896px;top:1077px;width:61px;height:3px;background:#76b0f0"></div>
<div class="a" style="left:971px;top:1077px;width:61px;height:3px;background:#76b0f0"></div>
<div class="a" style="left:1115px;top:1077px;width:66px;height:3px;background:#76b0f0"></div>
<div class="a" style="left:1196px;top:1077px;width:48px;height:3px;background:#76b0f0"></div>
<div class="a" style="left:1271px;top:1077px;width:61px;height:3px;background:#76b0f0"></div>
<div class="a" style="left:793px;top:1077px;width:13px;height:3px;background:#5c86c0"></div>
<div class="a" style="left:1182px;top:1077px;width:6px;height:3px;background:#5c86c0"></div>
<div class="a" style="left:1245px;top:1077px;width:12px;height:3px;background:#5c86c0"></div>
<svg style="left:1505.500px;top:1042.500px" width="22" height="14" viewBox="0 0 22 14"><path d="M1.500 11.500 L10.700 2.300 L20 11.500" fill="none" stroke="#fff" stroke-width="1.500"/></svg>
<svg style="left:1540px;top:1038px" width="26" height="24" viewBox="0 0 26 24"><g fill="none" stroke="#fff" stroke-width="1.300"><path d="M1 8 H4.500 L9.500 3 V21 L4.500 16 H1Z"/><path d="M13 9 Q14.800 12 13 15" stroke-linecap="round"/><path d="M16.500 6.500 Q19.800 12 16.500 17.500" stroke-linecap="round"/><path d="M20 4 Q24.800 12 20 20" stroke-linecap="round"/></g></svg>
<svg style="left:1576.500px;top:1043px" width="26" height="16" viewBox="0 0 26 16"><rect x=".800" y="1.400" width="21" height="12" fill="none" stroke="#fff" stroke-width="1.300"/><rect x="2.800" y="3.400" width="11.500" height="8" fill="#fff"/><rect x="22.200" y="5" width="1.600" height="4.800" fill="#fff"/></svg>
<svg style="left:1614px;top:1040px" width="24" height="22" viewBox="0 0 24 22"><g fill="none" stroke="#fff" stroke-width="1.400" stroke-linecap="round"><path d="M2.500 20 Q2.500 4 19.500 2.500"/><path d="M7.500 20 Q7.500 9 19 7.500"/><path d="M12.500 20 Q12.500 14 18 12.500"/></g><circle cx="18.500" cy="18.500" r="1.800" fill="#fff"/></svg>
<svg style="left:1647px;top:1039px" width="26" height="24" viewBox="0 0 26 24"><path d="M6.700 .800 L13 4.800 L6.700 8.800 L.500 4.800Z M19.300 .800 L25.500 4.800 L19.300 8.800 L13 4.800Z M.500 12.800 L6.700 8.800 L13 12.800 L6.700 16.800Z M13 12.800 L19.300 8.800 L25.500 12.800 L19.300 16.800Z M6.700 18.200 L13 14.200 L19.300 18.200 L13 22.200Z" fill="#fff"/></svg>
<div class="t" style="left:1688.30px;top:1043px;font-size:17.5px;color:#fff;letter-spacing:-1.271px;">РУС</div>
<div class="t" style="left:1768.30px;top:1029px;font-size:17.5px;color:#fff;letter-spacing:0.147px;">9:33</div>
<div class="t" style="left:1741.30px;top:1057px;font-size:17.5px;color:#fff;letter-spacing:-0.010px;">09.04.2021</div>
<svg style="left:1857px;top:1037px" width="42" height="42" viewBox="0 0 42 42"><path d="M1 1.200 H25 V19 H9 L4.500 23.500 V19 H1Z" fill="#fff"/><path d="M5.500 6.200 H20.500 M5.500 9.800 H20.500 M5.500 13.400 H20.500" stroke="#3c1c3b" stroke-width="1.300"/><circle cx="24" cy="24.700" r="13" fill="#3b2a3b" stroke="#8e8e8e" stroke-width="1"/></svg>
<div class="t" style="left:1870.80px;top:1053px;font-size:19px;color:#fff;-webkit-text-stroke:.75px #fff;letter-spacing:-.6px">15</div>
<div class="a" style="left:1912px;top:1020px;width:1.500px;height:60px;background:#9a8c9a"></div>
</div>
</body></html>
